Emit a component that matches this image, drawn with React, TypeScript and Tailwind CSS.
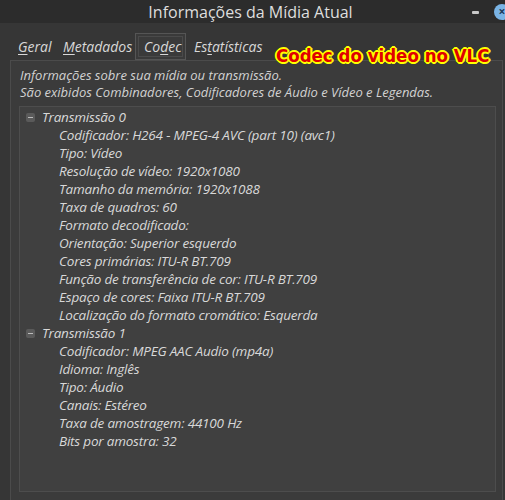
import React from 'react';

const stream0 = [
  'Codificador: H264 - MPEG-4 AVC (part 10) (avc1)',
  'Tipo: Vídeo',
  'Resolução de vídeo: 1920x1080',
  'Tamanho da memória: 1920x1088',
  'Taxa de quadros: 60',
  'Formato decodificado:',
  'Orientação: Superior esquerdo',
  'Cores primárias: ITU-R BT.709',
  'Função de transferência de cor: ITU-R BT.709',
  'Espaço de cores: Faixa ITU-R BT.709',
  'Localização do formato cromático: Esquerda',
];

const stream1 = [
  'Codificador: MPEG AAC Audio (mp4a)',
  'Idioma: Inglês',
  'Tipo: Áudio',
  'Canais: Estéreo',
  'Taxa de amostragem: 44100 Hz',
  'Bits por amostra: 32',
];

// label with one underlined mnemonic letter
const Tab = ({ text, key_, width, active }: { text: string; key_: number; width: string; active?: boolean }) => (
  <div
    className={`${width} h-[27px] flex items-center pl-[8px] italic text-[14px] ${
      active ? 'border border-[#555] bg-[#3a3a3a] outline outline-1 outline-[#4a4a4a] -outline-offset-4' : ''
    }`}
  >
    <span>
      {text.slice(0, key_)}
      <span className="underline underline-offset-2">{text[key_]}</span>
      {text.slice(key_ + 1)}
    </span>
  </div>
);

const Stream = ({ title, rows }: { title: string; rows: string[] }) => (
  <div>
    <div className="h-[18px] flex items-center">
      <div className="w-[9px] h-[9px] ml-[6px] mr-[7px] rounded-[2px] bg-[#5a5a5a] flex items-center justify-center">
        <div className="w-[5px] h-[1px] bg-[#bbb]" />
      </div>
      <span>{title}</span>
    </div>
    {rows.map((r) => (
      <div key={r} className="h-[18px] flex items-center pl-[39px] whitespace-nowrap">
        {r}
      </div>
    ))}
  </div>
);

export default function App() {
  return (
    <div className="w-[505px] h-[500px] overflow-hidden relative bg-[#363636] text-[#d8d8d8] font-['Open_Sans',sans-serif]">
      {/* Title bar */}
      <div className="h-[23px] bg-[#2c2c2c] flex items-center justify-center relative">
        <span className="text-[16px] text-[#dedede] ml-[-4px]">Informações da Mídia Atual</span>
        <div className="absolute left-[472px] top-[11px] w-[7px] h-[3px] rounded-[1px] bg-[#c8c8c8]" />
        <div className="absolute left-[494px] top-[4px] w-[16px] h-[16px] rounded-full bg-[#7ab4e6] flex items-center justify-center text-[#1d3a5a] text-[12px] font-bold leading-none">
          ×
        </div>
      </div>

      {/* Tabs */}
      <div className="flex pl-[10px] mt-[10px]">
        <Tab text="Geral" key_={0} width="w-[45px]" />
        <Tab text="Metadados" key_={0} width="w-[80px]" />
        <Tab text="Codec" key_={2} width="w-[51px]" active />
        <Tab text="Estatísticas" key_={2} width="w-[90px]" />
      </div>

      {/* Tab pane */}
      <div className="ml-[10px] w-[493px] h-[460px] border border-[#4b4b4b] bg-[#3b3b3b]">
        <div className="pl-[9px] pt-[6px] italic text-[13px] leading-[17px] text-[#d2d2d2]">
          <div>Informações sobre sua mídia ou transmissão.</div>
          <div>São exibidos Combinadores, Codificadores de Áudio e Vídeo e Legendas.</div>
        </div>
        <div className="ml-[8px] mt-[5px] w-[477px] h-[386px] border border-[#4d4d4d] bg-[#404040] pt-[1px] italic text-[13.5px] tracking-[-0.2px]">
          <Stream title="Transmissão 0" rows={stream0} />
          <Stream title="Transmissão 1" rows={stream1} />
        </div>
      </div>

      {/* Annotation over the screenshot */}
      <div className="absolute left-[276px] top-[42px] whitespace-nowrap font-['DejaVu_Sans_Condensed','DejaVu_Sans',sans-serif] font-bold text-[18.5px] text-[#e00000] [text-shadow:1px_0_0_#ff0,-1px_0_0_#ff0,0_1px_0_#ff0,0_-1px_0_#ff0,1px_1px_0_#ff0,-1px_-1px_0_#ff0,1px_-1px_0_#ff0,-1px_1px_0_#ff0,2px_0_0_#ff0,-2px_0_0_#ff0,0_2px_0_#ff0,0_-2px_0_#ff0]">
        Codec do video no VLC
      </div>
    </div>
  );
}
